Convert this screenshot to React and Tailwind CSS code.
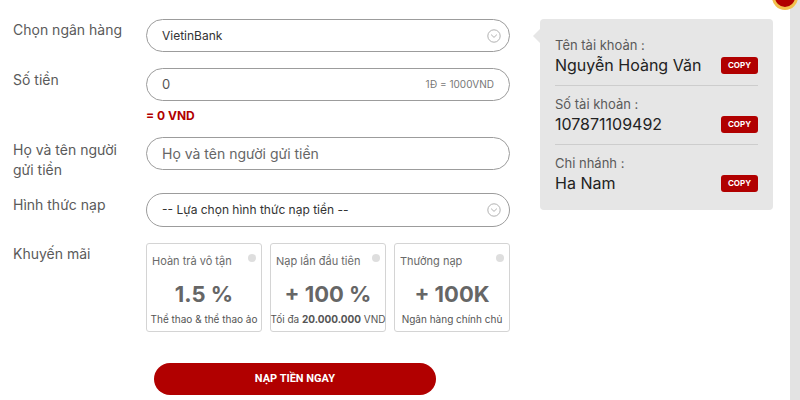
import React from "react";

const Chevron = () => (
  <svg width="14" height="14" viewBox="0 0 14 14" fill="none">
    <circle cx="7" cy="7" r="6.2" stroke="#a8a8a8" strokeWidth="0.9" />
    <path d="M4.4 5.9 L7 8.4 L9.6 5.9" stroke="#a8a8a8" strokeWidth="0.9" strokeLinecap="round" strokeLinejoin="round" />
  </svg>
);

const Card = ({ title, value, sub }) => (
  <div className="relative w-[116px] h-[89px] border border-[#d4d4d4] rounded-[3px] flex flex-col items-center">
    <div className="self-start pl-[5px] pt-[10px] text-[11px] leading-[14px] text-[#6a6a6a]">{title}</div>
    <div className="absolute right-[5px] top-[10px] w-[8px] h-[8px] rounded-full bg-[#dedede]" />
    <div className="mt-[13px] text-[22px] leading-[26px] font-bold text-[#666]">{value}</div>
    <div className="mt-[6px] text-[10px] leading-[13px] text-[#555] whitespace-nowrap">{sub}</div>
  </div>
);

const Info = ({ label, value }) => (
  <div className="py-[9px]">
    <div className="text-[13px] leading-[18px] text-[#5a5a5a]">{label}</div>
    <div className="flex items-center justify-between">
      <div className="text-[16px] leading-[22px] text-[#222]">{value}</div>
      <div className="w-[37px] h-[17px] rounded-[3px] bg-[#b10000] text-white text-[8px] font-bold flex items-center justify-center">COPY</div>
    </div>
  </div>
);

export default function App() {
  return (
    <div className="relative w-[800px] h-[400px] bg-white overflow-hidden flex" style={{ fontFamily: "Inter, 'Noto Sans', sans-serif" }}>
      <div className="w-[790px] flex">
        {/* left form */}
        <div className="w-[510px] pl-[13px] pt-[19px]">
          <div className="flex">
            <div className="w-[133px] pt-[1px] text-[14px] leading-[20px] text-[#5a5a5a]">Chọn ngân hàng</div>
            <div className="w-[364px] h-[33px] border border-[#9c9c9c] rounded-full flex items-center justify-between pl-[15px] pr-[8px]">
              <span className="text-[12px] text-[#333]">VietinBank</span>
              <Chevron />
            </div>
          </div>
          <div className="flex mt-[16px]">
            <div className="w-[133px] pt-[2px] text-[14px] leading-[20px] text-[#5a5a5a]">Số tiền</div>
            <div>
              <div className="w-[364px] h-[33px] border border-[#9c9c9c] rounded-full flex items-center justify-between pl-[15px] pr-[15px]">
                <span className="text-[13px] text-[#555]">0</span>
                <span className="text-[10px] text-[#777]">1Đ = 1000VND</span>
              </div>
              <div className="mt-[7px] text-[12px] leading-[16px] font-bold text-[#b10000]">= 0 VND</div>
            </div>
          </div>
          <div className="flex mt-[13px]">
            <div className="w-[133px] pt-[3px] text-[14px] leading-[20px] text-[#5a5a5a]">Họ và tên người<br />gửi tiền</div>
            <div className="w-[364px] h-[33px] border border-[#9c9c9c] rounded-full flex items-center pl-[15px]">
              <span className="text-[14px] text-[#666]">Họ và tên người gửi tiền</span>
            </div>
          </div>
          <div className="flex mt-[13px]">
            <div className="w-[133px] pt-[2px] text-[14px] leading-[20px] text-[#5a5a5a]">Hình thức nạp</div>
            <div className="w-[364px] h-[34px] border border-[#9c9c9c] rounded-full flex items-center justify-between pl-[15px] pr-[8px]">
              <span className="text-[12px] text-[#333]">-- Lựa chọn hình thức nạp tiền --</span>
              <Chevron />
            </div>
          </div>
          <div className="flex mt-[16px]">
            <div className="w-[133px] pt-[1px] text-[14px] leading-[20px] text-[#5a5a5a]">Khuyến mãi</div>
            <div className="flex gap-[8px]">
              <Card title="Hoàn trả vô tận" value="1.5 %" sub="Thể thao & thể thao ảo" />
              <Card title="Nạp lần đầu tiên" value="+ 100 %" sub={<>Tối đa <b className="font-bold">20.000.000</b> VND</>} />
              <Card title="Thưởng nạp" value="+ 100K" sub="Ngân hàng chính chủ" />
            </div>
          </div>
          <div className="ml-[141px] mt-[31px] w-[282px] h-[32px] rounded-full bg-[#b10000] flex items-center justify-center">
            <span className="text-white text-[11px] font-bold" style={{ fontFamily: "Roboto, sans-serif" }}>NẠP TIỀN NGAY</span>
          </div>
        </div>
        {/* right panel */}
        <div className="relative ml-[30px] mt-[19px] w-[233px] h-[191px] bg-[#e6e6e6] rounded-[4px] px-[15px] pt-[8px] self-start">
          <div className="absolute left-[-7px] top-[10px] w-0 h-0 border-y-[7px] border-y-transparent border-r-[7px] border-r-[#e6e6e6]" />
          <Info label="Tên tài khoản :" value="Nguyễn Hoàng Văn" />
          <div className="h-px bg-[#cdcdcd]" />
          <Info label="Số tài khoản :" value="107871109492" />
          <div className="h-px bg-[#cdcdcd]" />
          <Info label="Chi nhánh :" value="Ha Nam" />
        </div>
      </div>
      <div className="w-[10px] bg-[#e3e3e3]" />
      <div className="absolute left-[772px] top-[-16px] w-[26px] h-[26px] rounded-full bg-[#b10000] border-[3px] border-[#f2c14e]" />
    </div>
  );
}
